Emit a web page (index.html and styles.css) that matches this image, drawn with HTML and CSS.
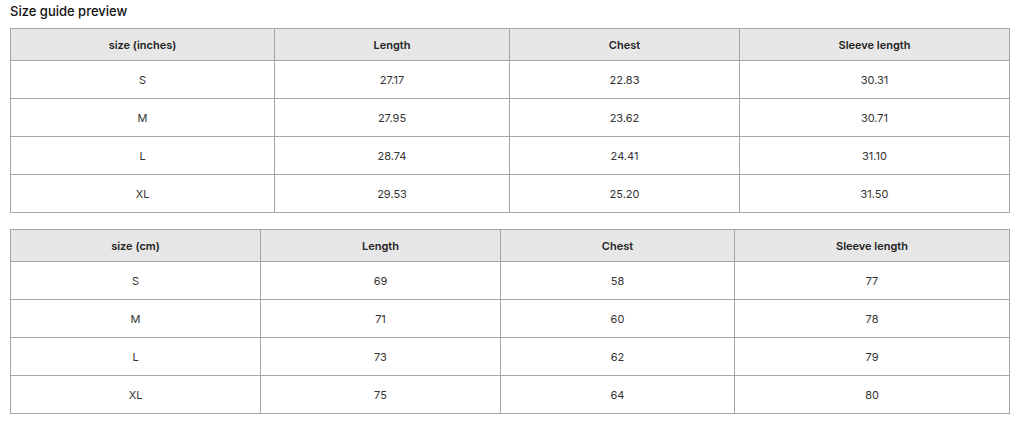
FILE: index.html
```html
<!DOCTYPE html>
<html lang="en">
<head>
<meta charset="utf-8">
<title>Size guide preview</title>
<link rel="stylesheet" href="styles.css">
</head>
<body>
<h1 class="title">Size guide preview</h1>
<table class="size-table">
  <colgroup>
    <col class="in-c1"><col class="in-c2"><col class="in-c3"><col class="in-c4">
  </colgroup>
  <thead>
    <tr><th>size (inches)</th><th>Length</th><th>Chest</th><th>Sleeve length</th></tr>
  </thead>
  <tbody>
    <tr><td>S</td><td>27.17</td><td>22.83</td><td>30.31</td></tr>
    <tr><td>M</td><td>27.95</td><td>23.62</td><td>30.71</td></tr>
    <tr><td>L</td><td>28.74</td><td>24.41</td><td>31.10</td></tr>
    <tr><td>XL</td><td>29.53</td><td>25.20</td><td>31.50</td></tr>
  </tbody>
</table>
<table class="size-table">
  <colgroup>
    <col class="cm-c1"><col class="cm-c2"><col class="cm-c3"><col class="cm-c4">
  </colgroup>
  <thead>
    <tr><th>size (cm)</th><th>Length</th><th>Chest</th><th>Sleeve length</th></tr>
  </thead>
  <tbody>
    <tr><td>S</td><td>69</td><td>58</td><td>77</td></tr>
    <tr><td>M</td><td>71</td><td>60</td><td>78</td></tr>
    <tr><td>L</td><td>73</td><td>62</td><td>79</td></tr>
    <tr><td>XL</td><td>75</td><td>64</td><td>80</td></tr>
  </tbody>
</table>
</body>
</html>
```
FILE: styles.css
```css
html, body {
  margin: 0;
  background: #ffffff;
}
body {
  padding: 3px 15px 0 10px;
  font-family: Inter, "Noto Sans", sans-serif;
  color: #222222;
}
.title {
  margin: 0 0 8px;
  font-size: 13px;
  font-weight: 500;
  line-height: 17px;
  color: #111111;
}
.size-table {
  width: 100%;
  table-layout: fixed;
  border-collapse: collapse;
  margin-bottom: 16px;
  font-size: 11px;
}
.in-c1 { width: 264px; }
.in-c2 { width: 235px; }
.in-c3 { width: 230px; }
.in-c4 { width: 270px; }
.cm-c1 { width: 250px; }
.cm-c2 { width: 240px; }
.cm-c3 { width: 234px; }
.cm-c4 { width: 275px; }
.size-table th,
.size-table td {
  border: 1px solid #a6a6a6;
  text-align: center;
  padding: 0 8px;
}
.size-table th {
  height: 31px;
  background: #e7e7e7;
  font-weight: 600;
  color: #222222;
}
.size-table td {
  height: 37px;
  color: #333333;
}
```
